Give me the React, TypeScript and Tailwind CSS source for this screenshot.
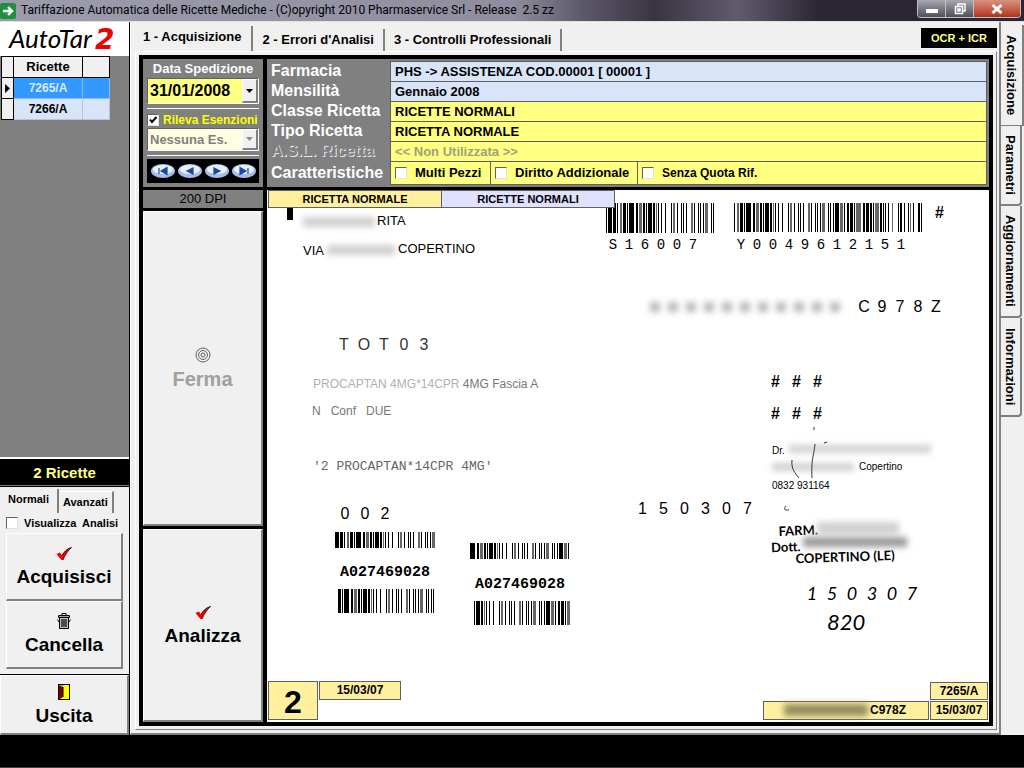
import * as React from 'react';
import { useState } from 'react';

const RAISED = "bg-[#f0f0f0] border-t border-l border-t-white border-l-white border-r-2 border-b-2 border-r-[#808080] border-b-[#808080]";

interface CheckProps {
    id: string;
    label: string;
    className?: string;
    textClass?: string;
    defaultChecked?: boolean;
}

const Check: React.FC<CheckProps> = ({ id, label, className = "", textClass = "text-[13px]", defaultChecked = false }) => {
    const [checked, setChecked] = useState(defaultChecked);

    return (
        <div className={`flex items-center ${className}`}>
            <span className="relative flex shrink-0">
                <input
                    id={id}
                    type="checkbox"
                    checked={checked}
                    onChange={() => setChecked(!checked)}
                    className="appearance-none w-3 h-3 bg-white border border-t-[#606060] border-l-[#606060] border-r-[#e0e0e0] border-b-[#e0e0e0]"
                />
                {checked && (
                    <svg viewBox="0 0 12 12" className="absolute inset-0 w-3 h-3 pointer-events-none">
                        <path d="M3 5.5 L5 8 L9.5 3" fill="none" stroke="#000" strokeWidth="2" />
                    </svg>
                )}
            </span>
            <label htmlFor={id} className={`whitespace-nowrap ${textClass}`}>{label}</label>
        </div>
    );
};

interface ComboProps {
    label: string;
    value: string;
    disabled?: boolean;
}

const Combo: React.FC<ComboProps> = ({ label, value, disabled = false }) => (
    <div className="relative border border-t-[#606060] border-l-[#606060] border-r-white border-b-white">
        <select
            aria-label={label}
            disabled={disabled}
            className={disabled
                ? "block appearance-none w-full h-[21px] pl-0.5 bg-[#ffffe1] text-[#808080] text-[13px] font-bold opacity-100"
                : "block appearance-none w-full h-6 pl-0.5 bg-[#ffff80] text-black text-[16px] font-bold"}
        >
            <option>{value}</option>
        </select>
        <span className={`absolute right-0 top-0 bottom-0 w-4 flex items-center justify-center pointer-events-none ${RAISED}`}>
            <svg viewBox="0 0 7 4" className="w-[7px] h-1">
                <path d="M0 0 H7 L3.5 4 Z" fill={disabled ? "#909090" : "#000"} />
            </svg>
        </span>
    </div>
);

const RedTick = () => (
    <svg viewBox="0 0 16 14" className="w-4 h-3.5">
        <path d="M0.5 7 L4 5.5 L6 8.5 C8 5 11 1.5 15.5 0.5 C12 3.5 9 8 7 13 L5.5 13 Z" fill="#f00000" />
        <path d="M6 8.5 C8 5 11 1.5 15.5 0.5" fill="none" stroke="#600000" strokeWidth="1" />
        <path d="M15.5 0.5 C12 3.5 9 8 7 13" fill="none" stroke="#000" strokeWidth="0.7" />
    </svg>
);

const Trash = () => (
    <svg viewBox="0 0 14 16" className="w-3.5 h-4" fill="none" stroke="#000">
        <path d="M5 2 V0.5 H9 V2" />
        <path d="M1.5 2.5 H12.5 V4.5 H1.5 Z" fill="#a0a0a0" />
        <path d="M2.5 5 V15.5 H11.5 V5" fill="#c0c0c0" />
        <path d="M5 6 V14 M7 6 V14 M9 6 V14" strokeWidth="1.2" />
        <path d="M0.5 6.5 L2 9 M13.5 6.5 L12 9" />
    </svg>
);

const Door = () => (
    <svg viewBox="0 0 12 16" className="w-3 h-4">
        <rect x="0.5" y="0.5" width="11" height="15" fill="#ffff00" stroke="#000" />
        <path d="M1 1 L5 3 V13 L1 15.5 Z" fill="#800000" />
        <path d="M1 1 H5 V3 Z" fill="#a0a0a0" />
        <path d="M5 3 V6 M5 8 V13" stroke="#000" />
        <path d="M3.5 7 H6" stroke="#000" />
    </svg>
);

const NAV = [
    { name: "Primo", d: "M8 4 V10 M16 3.5 V10.5 L10 7 Z" },
    { name: "Precedente", d: "M15 4 V10 L9 7 Z" },
    { name: "Successivo", d: "M9 4 V10 L15 7 Z" },
    { name: "Ultimo", d: "M16 4 V10 M8 3.5 V10.5 L14 7 Z" },
];

const Navigator = () => (
    <div className="flex items-center justify-around bg-black h-6 px-0.5">
        {NAV.map((n) => (
            <button key={n.name} type="button" aria-label={n.name} className="flex">
                <svg viewBox="0 0 24 14" className="w-6 h-3.5">
                    <ellipse cx="12" cy="7" rx="12" ry="7" fill="#a8bce8" />
                    <ellipse cx="12" cy="5.5" rx="10" ry="4.5" fill="#e8f0ff" />
                    <path d={n.d} fill="#1848a8" stroke="#1848a8" strokeWidth="1.2" />
                </svg>
            </button>
        ))}
    </div>
);

// alternating bar / space widths
const BARS = "1141311221311152213121114121111213151122131112142113111211331112";

interface BarcodeProps {
    className: string;
    units: number;
    start?: number;
}

const Barcode: React.FC<BarcodeProps> = ({ className, units, start = 0 }) => {
    const bars: React.ReactNode[] = [];
    let x = 0;
    let i = start;
    while (x < units) {
        const w = Number(BARS[i % BARS.length]);
        if (i % 2 === 0) {
            bars.push(<rect key={i} x={x} y="0" width={Math.min(w, units - x)} height="10" fill={i % 5 === 3 ? "#666" : "#000"} />);
        }
        x += w;
        i++;
    }
    return (
        <svg viewBox={`0 0 ${units} 10`} preserveAspectRatio="none" className={`absolute ${className}`}>{bars}</svg>
    );
};

interface CellsProps {
    text: string;
    className: string;
    cell: string;
}

// one character per box, as on the printed form
const Cells: React.FC<CellsProps> = ({ text, className, cell }) => (
    <div className={`absolute flex leading-none ${className}`}>
        {text.split("").map((c, i) => (
            <span key={i} className={`text-center ${cell}`}>{c}</span>
        ))}
    </div>
);

const Smudge: React.FC<{ className: string }> = ({ className }) => (
    <span className={`absolute blur-[3px] ${className}`} />
);

const Scan = () => (
    <div className="relative flex-1 bg-white text-black overflow-hidden">
        <div className="absolute left-5 top-3 w-1.5 h-[18px] bg-black" />
        <Barcode className="left-[339px] top-[13px] w-[109px] h-[30px]" units={109} />
        <Barcode className="left-[467px] top-[13px] w-[189px] h-[29px]" units={189} start={6} />
        <Cells text="S16007" className="left-[338px] top-12 text-[14px] font-['Liberation_Mono',monospace]" cell="w-4" />
        <Cells text="Y0049612151" className="left-[466px] top-12 text-[14px] font-['Liberation_Mono',monospace]" cell="w-4" />
        <span className="absolute left-[668px] top-[13px] text-[16px] font-bold leading-5">#</span>

        <Smudge className="left-9 top-[27px] w-[72px] h-2.5 bg-[#d0d0d0]" />
        <p className="absolute left-[110px] top-[23px] text-[13px] leading-4">RITA</p>
        <p className="absolute left-9 top-[53px] text-[13px] leading-4">VIA</p>
        <Smudge className="left-[60px] top-[55px] w-[68px] h-2.5 bg-[#d0d0d0]" />
        <p className="absolute left-[131px] top-[51px] text-[13px] leading-4">COPERTINO</p>

        <div className="absolute left-[383px] top-[112px] flex gap-2">
            {[0, 1, 2, 3, 4, 5, 6, 7, 8, 9, 10].map((n) => (
                <span key={n} className="w-2.5 h-2.5 bg-[#b8b8b8] blur-[3px]" />
            ))}
        </div>
        <Cells text="C978Z" className="left-[588px] top-[109px] text-[16px]" cell="w-[18px]" />

        <Cells text="TOT03" className="left-[67px] top-[147px] text-[16px] text-[#333]" cell="w-5" />
        <p className="absolute left-[46px] top-[186px] text-[12px] leading-4 text-[#777]">
            <span className="text-[#b0b0b0]">PROCAPTAN 4MG*14CPR</span> 4MG Fascia A
        </p>
        <p className="absolute left-[45px] top-[213px] text-[12px] leading-4 text-[#777] whitespace-pre">N   Conf   DUE</p>

        <Cells text="###" className="left-[498px] top-[184px] text-[16px] font-bold" cell="w-[21px]" />
        <Cells text="###" className="left-[498px] top-[216px] text-[16px] font-bold" cell="w-[21px]" />

        <p className="absolute left-[46px] top-[269px] text-[13px] leading-4 text-[#666] font-['Liberation_Mono',monospace]">'2 PROCAPTAN*14CPR 4MG'</p>
        <Cells text="002" className="left-[68px] top-[316px] text-[16px]" cell="w-5" />
        <Cells text="150307" className="left-[365px] top-[311px] text-[16px]" cell="w-[21px]" />

        <Barcode className="left-[68px] top-[342px] w-[101px] h-4" units={101} start={2} />
        <p className="absolute left-[73px] top-[375px] text-[15px] leading-4 font-bold font-['Liberation_Mono',monospace]">A027469028</p>
        <Barcode className="left-[71px] top-[399px] w-24 h-6" units={96} start={10} />
        <Barcode className="left-[203px] top-[353px] w-[101px] h-4" units={101} start={14} />
        <p className="absolute left-[208px] top-[387px] text-[15px] leading-4 font-bold font-['Liberation_Mono',monospace]">A027469028</p>
        <Barcode className="left-[207px] top-[411px] w-24 h-6" units={96} start={22} />

        <p className="absolute left-[505px] top-[253px] text-[10px] leading-4">Dr.</p>
        <Smudge className="left-[522px] top-[255px] w-[142px] h-2 bg-[#d0d0d0]" />
        <Smudge className="left-[505px] top-[273px] w-[82px] h-2 bg-[#d0d0d0]" />
        <p className="absolute left-[592px] top-[269px] text-[10px] leading-4">Copertino</p>
        <p className="absolute left-[505px] top-[288px] text-[10px] leading-4">0832 931164</p>
        <svg viewBox="0 0 50 90" className="absolute left-[512px] top-[234px] w-[50px] h-[90px]" fill="none" stroke="#333">
            <path d="M35 3 V6 M45 19 L48 18 M36 20 C35 32 32 34 33 54 M13 36 C12 45 16 49 20 54 M7 82 C4 86 6 86 10 86" />
        </svg>

        <div className="absolute left-[504px] top-[331px] -rotate-2 text-[13px] font-['Lato',sans-serif] font-bold">
            <p className="pl-2 leading-4">FARM.</p>
            <p className="leading-4">Dott.</p>
            <p className="pl-6 -mt-1 leading-4">COPERTINO (LE)</p>
        </div>
        <Smudge className="left-[550px] top-[332px] w-[82px] h-3 bg-[#d0d0d0]" />
        <Smudge className="left-[536px] top-[347px] w-[104px] h-2.5 bg-[#999]" />

        <Cells text="150307" className="left-[535px] top-[394px] text-[18px] italic font-['Lato',sans-serif]" cell="w-5" />
        <p className="absolute left-[560px] top-[420px] text-[22px] leading-6 italic font-['Lato',sans-serif]">820</p>

        <div className="absolute left-px top-0 flex text-[11px] font-bold leading-4 text-center">
            <span className="w-[174px] border border-[#606060] bg-[#fff0a0]">RICETTA NORMALE</span>
            <span className="w-[173px] border border-l-0 border-[#606060] bg-[#e0e0ff]">RICETTE NORMALI</span>
        </div>
        <div className="absolute left-px bottom-0.5 flex items-start gap-px font-bold text-center">
            <span className="w-[50px] h-[39px] border border-[#606060] bg-[#fff0a0] text-[32px] leading-10">2</span>
            <span className="w-[82px] h-[19px] border border-[#606060] bg-[#fff0a0] text-[12px] leading-4">15/03/07</span>
        </div>
        <div className="absolute right-px bottom-0.5 flex items-end gap-px text-[12px] leading-4 font-bold text-center">
            <span className="relative w-[166px] h-[19px] pr-[22px] border border-[#606060] bg-[#fff0a0] text-right">
                C978Z
                <span className="absolute left-5 top-0.5 w-[84px] h-3 bg-[#958c5e] blur-[3px]" />
            </span>
            <span className="flex flex-col gap-px">
                <span className="w-[58px] h-[18px] border border-[#606060] bg-[#fff0a0]">7265/A</span>
                <span className="w-[58px] h-[19px] border border-[#606060] bg-[#fff0a0]">15/03/07</span>
            </span>
        </div>
    </div>
);

const FIELDS = [
    { label: "Farmacia", value: "PHS -> ASSISTENZA COD.00001 [ 00001 ]", style: "bg-[#d8e4f8] text-black" },
    { label: "Mensilità", value: "Gennaio 2008", style: "bg-[#d8e4f8] text-black" },
    { label: "Classe Ricetta", value: "RICETTE NORMALI", style: "bg-[#ffff80] text-black" },
    { label: "Tipo Ricetta", value: "RICETTA NORMALE", style: "bg-[#ffff80] text-black" },
    { label: "A.S.L. Ricetta", value: "<< Non Utilizzata >>", style: "bg-[#ffff80] text-[#a0a080]", off: true },
];

const Details = () => (
    <div className="bg-[#808080] h-32 p-0.5 pl-1 text-white font-bold">
        {FIELDS.map((f) => (
            <div key={f.label} className="flex h-5">
                <label htmlFor={f.label} className={`w-[119px] text-[16px] leading-5 ${f.off ? "text-[#808080] [text-shadow:1px_1px_0_#e8e8e8]" : ""}`}>{f.label}</label>
                <input id={f.label} readOnly value={f.value} className={`flex-1 min-w-0 h-5 border border-b-0 border-[#606060] px-1 text-[13px] ${f.style}`} />
            </div>
        ))}
        <div className="flex h-6">
            <span className="w-[119px] text-[16px] leading-6">Caratteristiche</span>
            <div className="flex-1 flex border border-[#606060] bg-[#ffff80] text-black">
                <Check id="multi" label="Multi Pezzi" className="w-[100px] gap-2 pl-1 border-r border-[#606060]" />
                <Check id="diritto" label="Diritto Addizionale" className="w-[147px] gap-2 pl-1 border-r border-[#606060]" />
                <Check id="quota" label="Senza Quota Rif." className="gap-2 pl-1" textClass="text-[12px]" />
            </div>
        </div>
    </div>
);

const Sidebar = () => (
    <aside className="w-[130px] shrink-0 flex flex-col bg-[#f0f0f0] border-r border-black font-bold">
        <div className="h-[34px] bg-white">
            <svg viewBox="0 0 129 34" className="block w-[129px] h-[34px]" role="img" aria-label="AutoTar 2">
                <text x="9" y="26" fontSize="26" fontStyle="italic" fontWeight="400" fontFamily="Lato, sans-serif">AutoTar</text>
                <text x="95" y="27" fontSize="28" fontWeight="700" fontStyle="italic" fill="#f00000" fontFamily="DejaVu Sans, sans-serif">2</text>
            </svg>
        </div>
        <div className="flex-1 bg-[#808080] border-b-2 border-white pl-px">
            <table className="w-[109px] table-fixed border-collapse text-[12px] text-center">
                <thead>
                    <tr className="h-[21px] bg-[#f0f0f0] text-[13px]">
                        <th className="w-3 border border-black"></th>
                        <th className="border border-black">Ricette</th>
                        <th className="w-[27px] border border-black"></th>
                    </tr>
                </thead>
                <tbody>
                    <tr className="h-[21px] bg-[#3399ff] text-[#d8ecff]">
                        <td className="bg-[#f0f0f0] border border-black">
                            <svg viewBox="0 0 5 9" className="mx-auto w-[5px] h-[9px]"><path d="M0 0 L5 4.5 L0 9 Z" /></svg>
                        </td>
                        <td className="border border-[#88bbee]">7265/A</td>
                        <td className="border border-[#88bbee]"></td>
                    </tr>
                    <tr className="h-[21px] bg-[#d8e4f8]">
                        <td className="bg-[#f0f0f0] border border-black"></td>
                        <td className="border border-[#b8c4d8]">7266/A</td>
                        <td className="border border-[#b8c4d8]"></td>
                    </tr>
                </tbody>
            </table>
        </div>
        <p className="h-[27px] bg-black text-[#ffff80] text-[15px] leading-[27px] text-center border-b border-[#808080]">2 Ricette</p>
        <div className="border-t border-black pt-0.5">
            <div className="flex items-end text-[11px]" role="tablist">
                <button type="button" role="tab" aria-selected="true" className="h-6 px-2 pb-1 border-r-2 border-[#808080]">Normali</button>
                <button type="button" role="tab" aria-selected="false" className="h-[22px] px-1 border-r-2 border-t border-t-white border-r-[#808080]">Avanzati</button>
            </div>
            <Check id="visualizza" label="Visualizza  Analisi" className="h-5 pl-1.5 gap-1.5" textClass="text-[11px] whitespace-pre" />
            <div className="flex flex-col px-1.5 pb-1.5 text-[19px] leading-6">
                <button type="button" className={`h-[68px] flex flex-col items-center justify-center gap-1 pt-0.5 ${RAISED}`}>
                    <RedTick />
                    Acquisisci
                </button>
                <button type="button" className={`h-[68px] flex flex-col items-center justify-center gap-1 ${RAISED}`}>
                    <Trash />
                    Cancella
                </button>
            </div>
        </div>
        <button type="button" className={`h-[60px] flex flex-col items-center justify-center gap-1 pt-0.5 text-[19px] leading-6 outline outline-black ${RAISED}`}>
            <Door />
            Uscita
        </button>
    </aside>
);

const Work = () => (
    <main className="flex-1 min-w-0 flex flex-col bg-[#f0f0f0] border-l border-white border-r-2 border-b-2 border-r-[#808080] border-b-[#808080] pt-1 pl-1 pr-0.5 pb-[3px]">
        <div className="flex items-end h-[25px] text-[13px] font-bold" role="tablist">
            <button type="button" role="tab" aria-selected="true" className="h-[25px] pl-2 pr-2.5 pb-1 border-r-2 border-[#808080]">1 - Acquisizione</button>
            <button type="button" role="tab" aria-selected="false" className="h-[22px] px-[9px] border-r-2 border-[#808080]">2 - Errori d'Analisi</button>
            <button type="button" role="tab" aria-selected="false" className="h-[22px] px-[9px] border-r-2 border-[#808080]">3 - Controlli Professionali</button>
            <span className="ml-auto self-start mt-0.5 w-[76px] h-5 bg-black text-[#ffff80] text-[11px] leading-5 text-center">OCR + ICR</span>
        </div>
        <div className="flex-1 flex border border-t-white border-l-white border-r-[#808080] border-b-[#808080] p-[3px]">
            <div className="flex-1 min-w-0 flex gap-1 bg-black p-1">
                <div className="w-[120px] shrink-0 flex flex-col gap-[3px]">
                    <div className="h-32 bg-[#808080] px-1 pt-0.5 text-[13px] font-bold text-white flex flex-col">
                        <span className="leading-4 text-center whitespace-nowrap mb-px">Data Spedizione</span>
                        <Combo label="Data Spedizione" value="31/01/2008" />
                        <div className="border-t border-white mt-1 pt-0.5">
                            <Check id="rileva" label="Rileva Esenzioni" className="h-[17px] gap-1 text-[#ffff00]" textClass="text-[12px]" defaultChecked />
                        </div>
                        <Combo label="Esenzione" value="Nessuna Es." disabled />
                        <div className="border-t border-white mt-1 pt-[3px]">
                            <Navigator />
                        </div>
                    </div>
                    <p className="h-[18px] bg-[#808080] text-black text-[13px] leading-[18px] text-center">200 DPI</p>
                    <button type="button" disabled className={`flex-5 flex flex-col items-center justify-center gap-1 pt-0.5 text-[20px] leading-6 font-bold text-[#a0a0a0] ${RAISED}`}>
                        <svg viewBox="0 0 16 16" className="w-4 h-4" fill="none" stroke="#606060">
                            <circle cx="8" cy="8" r="7" />
                            <circle cx="8" cy="8" r="4.5" />
                            <circle cx="8" cy="8" r="2" />
                        </svg>
                        Ferma
                    </button>
                    <button type="button" className={`flex-3 flex flex-col items-center justify-center gap-1 pt-1 text-[19px] leading-6 font-bold ${RAISED}`}>
                        <RedTick />
                        Analizza
                    </button>
                </div>
                <div className="flex-1 min-w-0 flex flex-col gap-[3px]">
                    <Details />
                    <Scan />
                </div>
            </div>
        </div>
    </main>
);

const SideTabs = () => (
    <nav className="w-[23px] shrink-0 flex flex-col items-start bg-[#f0f0f0] pt-[3px] text-[13px] font-bold" role="tablist">
        <button type="button" role="tab" aria-selected="true" className="w-[23px] h-[101px] flex items-center justify-center [writing-mode:vertical-rl] border-r-2 border-b border-[#808080]">Acquisizione</button>
        <button type="button" role="tab" aria-selected="false" className="w-[21px] h-20 flex items-center justify-center [writing-mode:vertical-rl] border-r-2 border-b-2 border-[#808080] rounded-br-sm">Parametri</button>
        <button type="button" role="tab" aria-selected="false" className="w-[21px] h-28 flex items-center justify-center [writing-mode:vertical-rl] border-r-2 border-b-2 border-[#808080] rounded-br-sm">Aggiornamenti</button>
        <button type="button" role="tab" aria-selected="false" className="w-[21px] h-[99px] flex items-center justify-center [writing-mode:vertical-rl] border-r-2 border-b-2 border-[#808080] rounded-br-sm">Informazioni</button>
    </nav>
);

const TitleBar = () => (
    <header className="h-[22px] flex items-start bg-[linear-gradient(90deg,#9c9cac_0%,#908e9e_50%,#5c5868_57%,#3a3442_64%,#605c6c_72%,#2c2634_80%,#2c2634_100%)] border-b border-[#e0e0e0]">
        <svg viewBox="0 0 16 16" className="w-4 h-4 mt-[3px]">
            <rect width="16" height="16" rx="2" fill="#209040" />
            <path d="M3 8 H12 M8 4 L12 8 L8 12" fill="none" stroke="#fff" strokeWidth="2.4" />
        </svg>
        <h1 className="ml-[5px] text-[12px] leading-[21px] text-black whitespace-pre font-['Roboto',sans-serif]">Tariffazione Automatica delle Ricette Mediche - (C)opyright 2010 Pharmaservice Srl - Release  2.5 zz</h1>
        <div className="ml-auto mr-[3px] flex h-[18px] border border-t-0 border-[#c0c0c8] rounded-b overflow-hidden">
            <button type="button" aria-label="Riduci" className="w-7 flex items-center justify-center bg-linear-to-b from-[#a8a8b0] to-[#50505c] border-r border-[#c0c0c8]">
                <svg viewBox="0 0 12 4" className="w-3 h-1 mt-1"><rect width="12" height="4" fill="#fff" /></svg>
            </button>
            <button type="button" aria-label="Ripristina" className="w-7 flex items-center justify-center bg-linear-to-b from-[#a8a8b0] to-[#50505c] border-r border-[#c0c0c8]">
                <svg viewBox="0 0 12 12" className="w-3 h-3" fill="none" stroke="#fff" strokeWidth="1.5">
                    <path d="M4 3 V1 H11 V8 H9" />
                    <rect x="1.5" y="3.5" width="7" height="7" />
                    <rect x="4" y="6" width="2" height="2" />
                </svg>
            </button>
            <button type="button" aria-label="Chiudi" className="w-[46px] flex items-center justify-center bg-linear-to-b from-[#d89080] to-[#b03018]">
                <svg viewBox="0 0 12 10" className="w-3 h-2.5"><path d="M1.5 1 L10.5 9 M10.5 1 L1.5 9" stroke="#fff" strokeWidth="3" /></svg>
            </button>
        </div>
    </header>
);

export default function App() {
    return (
        <div className="min-h-screen flex flex-col bg-black text-black font-['Liberation_Sans',Arial,sans-serif]">
            <TitleBar />
            <div className="flex-1 flex">
                <Sidebar />
                <Work />
                <SideTabs />
            </div>
            <footer className="h-[33px] bg-black border-b border-[#444]" />
        </div>
    );
}
